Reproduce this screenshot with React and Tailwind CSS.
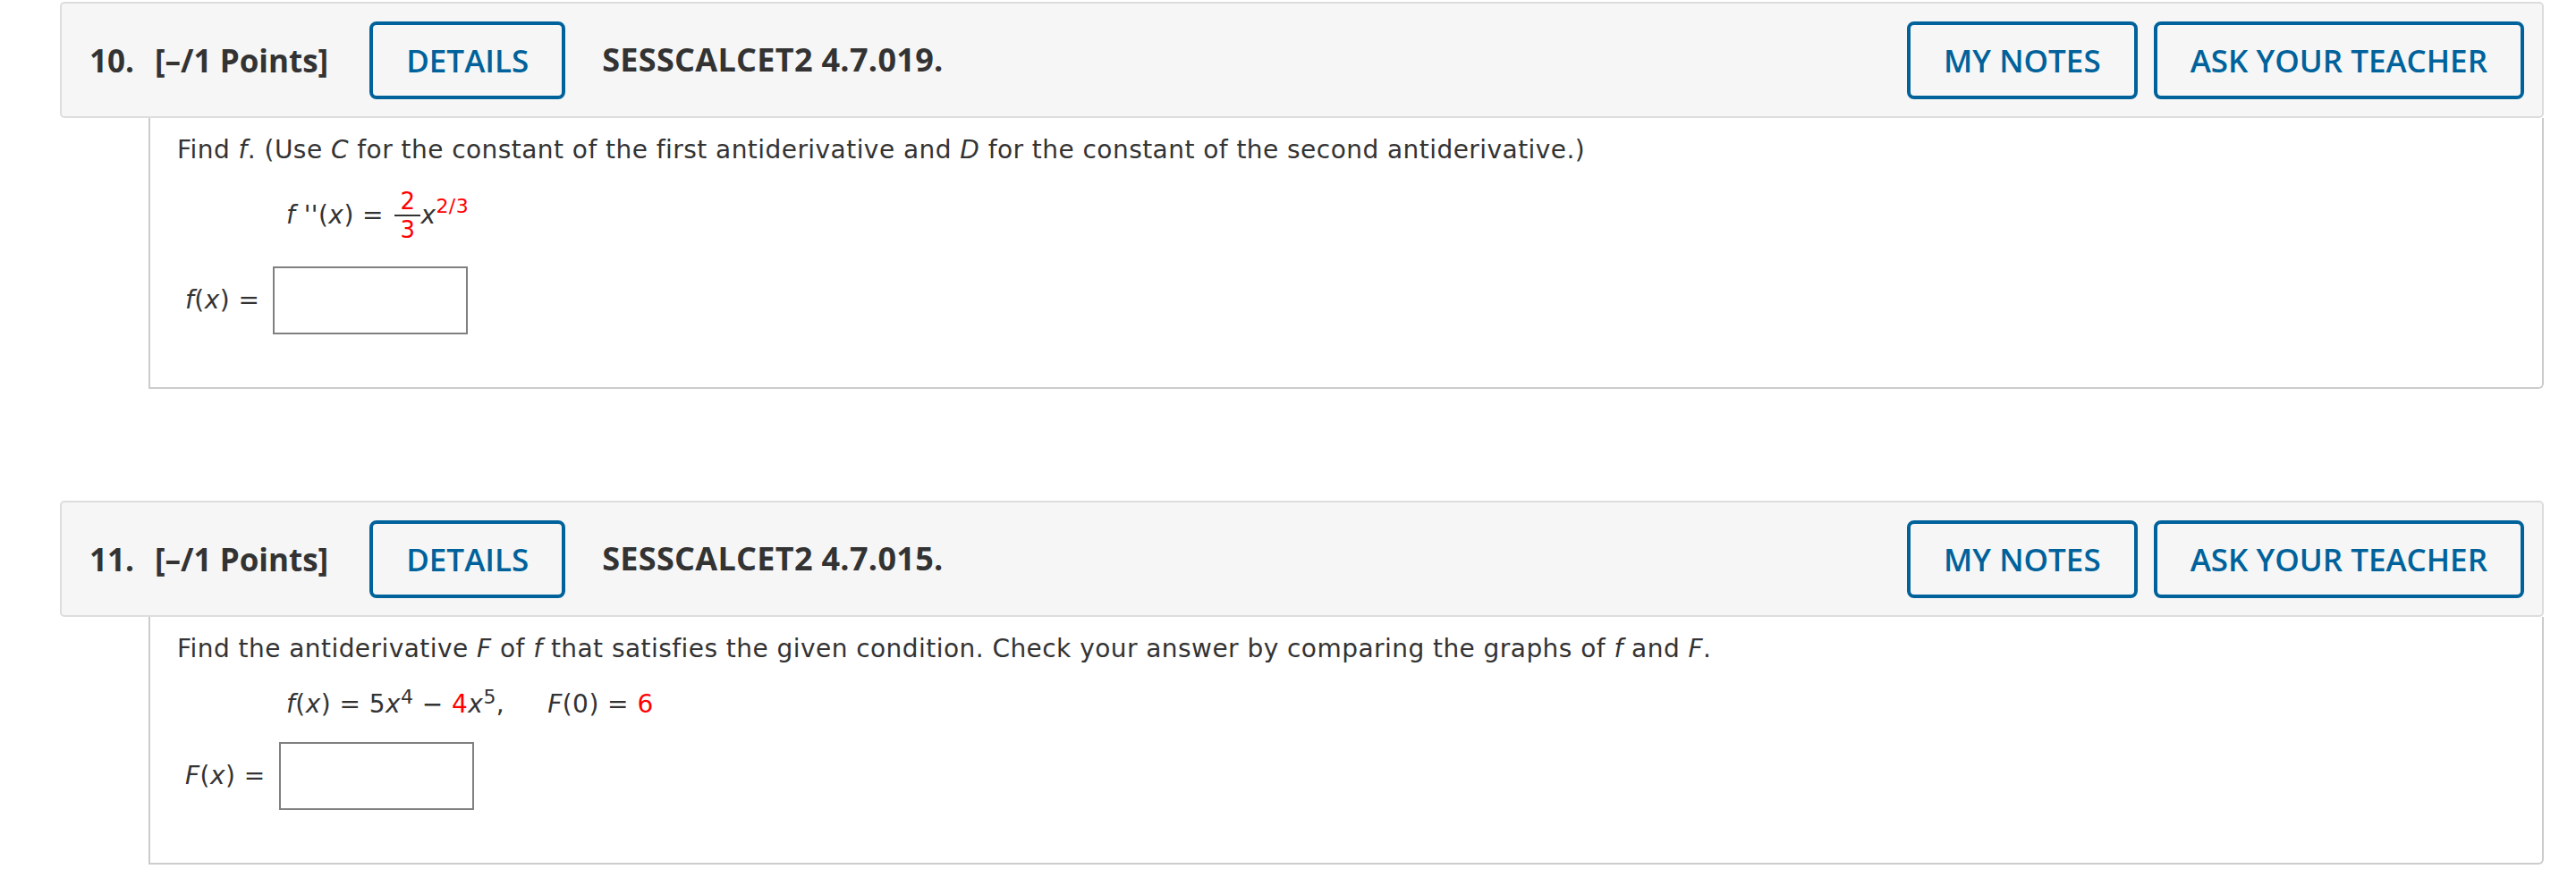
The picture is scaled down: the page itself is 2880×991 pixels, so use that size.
import React from 'react';

function OutlineButton({ children, className = '' }) {
  return (
    <button
      className={`h-[87px] px-[37px] border-4 border-[#00629b] rounded-[8px] bg-[#f6f6f6] text-[#00629b] text-[35px] font-semibold leading-none whitespace-nowrap ${className}`}
    >
      {children}
    </button>
  );
}

function QuestionHeader({ num, code }) {
  return (
    <div className="h-[130px] flex items-center bg-[#f6f6f6] border-2 border-[#dddddd] rounded-[5px] pl-[31px] pr-[20px] font-['Open_Sans',sans-serif] text-[#333333]">
      <span className="text-[35px] font-bold leading-none">{num}.</span>
      <span className="ml-[23px] text-[35px] font-bold leading-none">[–/1 Points]</span>
      <OutlineButton className="ml-[46px]">DETAILS</OutlineButton>
      <span className="ml-[41px] text-[36px] font-bold leading-none tracking-[0.3px]">{code}</span>
      <div className="ml-auto flex items-center gap-[18px]">
        <OutlineButton>MY NOTES</OutlineButton>
        <OutlineButton>ASK YOUR TEACHER</OutlineButton>
      </div>
    </div>
  );
}

function AnswerRow({ label, className = '' }) {
  return (
    <div className={`flex items-center ml-[9px] ${className}`}>
      <span className="whitespace-nowrap">{label}</span>
      <input
        type="text"
        className="ml-[15px] w-[218px] h-[76px] border-2 border-[#808080] bg-white outline-none"
      />
    </div>
  );
}

function QuestionBody({ children }) {
  return (
    <div className="ml-[99px] border-2 border-t-0 border-[#cccccc] rounded-br-[6px] bg-white pl-[30px] pt-[19px] pb-[59px] font-['DejaVu_Sans',Verdana,sans-serif] text-[28px] leading-[34px] tracking-[0.45px] text-[#333333]">
      {children}
    </div>
  );
}

export default function App() {
  return (
    <div className="min-h-screen bg-white pt-[2px] pl-[67px] pr-[36px]">
      {/* question 10 */}
      <QuestionHeader num="10" code="SESSCALCET2 4.7.019." />
      <QuestionBody>
        <p>
          Find <i>f</i>. (Use <i>C</i> for the constant of the first antiderivative and <i>D</i> for the
          constant of the second antiderivative.)
        </p>
        <div className="mt-[28px] ml-[122px] flex items-center">
          <span className="whitespace-pre">
            <i>f</i> ''(<i>x</i>) ={' '}
          </span>
          <span className="ml-[3px] flex flex-col items-center text-[26px] leading-[24px] text-[#ff0000]">
            <span className="px-[6px]">2</span>
            <span className="my-[3px] h-[2px] w-full bg-[#333333]"></span>
            <span className="px-[6px]">3</span>
          </span>
          <span>
            <i>x</i>
            <span className="relative -top-[12px] text-[22px] leading-none text-[#ff0000]">2/3</span>
          </span>
        </div>
        <AnswerRow className="mt-[29px]" label={<><i>f</i>(<i>x</i>) =</>} />
      </QuestionBody>

      <div className="h-[125px]" />

      {/* question 11 */}
      <QuestionHeader num="11" code="SESSCALCET2 4.7.015." />
      <QuestionBody>
        <p>
          Find the antiderivative <i>F</i> of <i>f</i> that satisfies the given condition. Check your answer by
          comparing the graphs of <i>f</i> and <i>F</i>.
        </p>
        <div className="mt-[28px] ml-[122px] whitespace-pre">
          <i>f</i>(<i>x</i>) = 5<i>x</i>
          <span className="relative -top-[10px] text-[22px] leading-none">4</span> − <span className="text-[#ff0000]">4</span>
          <i>x</i>
          <span className="relative -top-[10px] text-[22px] leading-none">5</span>,
          <span className="ml-[48px]">
            <i>F</i>(0) = <span className="text-[#ff0000]">6</span>
          </span>
        </div>
        <AnswerRow className="mt-[25px]" label={<><i>F</i>(<i>x</i>) =</>} />
      </QuestionBody>
    </div>
  );
}
